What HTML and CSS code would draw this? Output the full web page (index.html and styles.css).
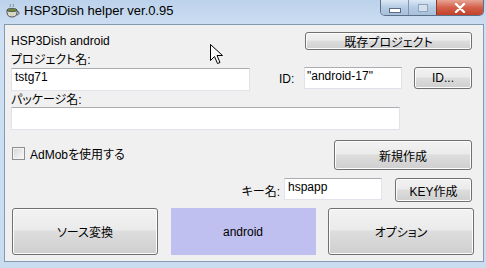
FILE: index.html
```html
<!DOCTYPE html>
<html lang="ja">

<head>
    <title>HSP3Dish helper</title>
    <meta charset="UTF-8">
    <link rel="stylesheet" href="styles.css">
</head>

<body>
    <div class="window">
        <div class="titlebar">
            <svg class="app-icon" width="16" height="16" viewBox="0 0 16 16">
                <path d="M3 7 h10 v2 q0 5 -5 5 q-5 0 -5 -5 z" fill="#d8d8c8" stroke="#555" stroke-width="1"/>
                <ellipse cx="8" cy="7" rx="5" ry="1.6" fill="#6a8a3a" stroke="#444" stroke-width="0.8"/>
                <path d="M13 8.5 q2.5 0 2 2 q-0.5 1.5 -2.5 1.5" fill="none" stroke="#555" stroke-width="1"/>
                <path d="M6 4 q1 -1.5 0 -3 M9 4 q1 -1.5 0 -3" fill="none" stroke="#777" stroke-width="0.8"/>
            </svg>
            <span class="title">HSP3Dish helper ver.0.95</span>
            <div class="caption-buttons">
                <div class="cap-btn cap-min"><span class="min-bar"></span></div>
                <div class="cap-btn cap-max"><span class="max-box"></span></div>
                <div class="cap-btn cap-close">
                    <svg width="12" height="10" viewBox="0 0 12 10">
                        <path d="M2 1 L10 9 M10 1 L2 9" stroke="#fff" stroke-width="2.4" stroke-linecap="round"/>
                    </svg>
                </div>
            </div>
        </div>

        <div class="client">
            <div class="row row-top">
                <span>HSP3Dish android</span>
                <button class="btn btn-existing">既存プロジェクト</button>
            </div>

            <div class="label">プロジェクト名:</div>

            <div class="row row-project">
                <div class="field field-name">tstg71</div>
                <span class="id-label">ID:</span>
                <div class="field field-id">"android-17"</div>
                <button class="btn btn-id">ID...</button>
            </div>

            <div class="label">パッケージ名:</div>

            <div class="row row-package">
                <div class="field field-package"></div>
            </div>

            <div class="row row-admob">
                <label class="check">
                    <span class="check-box"></span>
                    <span>AdMobを使用する</span>
                </label>
                <button class="btn btn-new">新規作成</button>
            </div>

            <div class="row row-key">
                <span class="key-label">キー名:</span>
                <div class="field field-key">hspapp</div>
                <button class="btn btn-key">KEY作成</button>
            </div>

            <div class="row row-bottom">
                <button class="btn btn-big btn-convert">ソース変換</button>
                <div class="target">android</div>
                <button class="btn btn-big btn-option">オプション</button>
            </div>

            <svg class="cursor" width="13" height="21" viewBox="0 0 13 21">
                <path d="M0.5 0.5 L0.5 16.5 L4.5 12.5 L7.5 19.5 L10 18.5 L7 11.5 L12.5 11.5 Z" fill="#fff" stroke="#000" stroke-width="1"/>
            </svg>
        </div>
    </div>
</body>

</html>
```

FILE: styles.css
```css
body {
    margin: 0;
    background: #c4d8ee;
    font-family: "Liberation Sans", "Noto Sans CJK JP", sans-serif;
    font-size: 12px;
    font-feature-settings: "palt";
    color: #000;
}

.window {
    width: 486px;
    height: 268px;
    background: linear-gradient(to bottom, #bcd2eb, #cfe0f3 30px, #c9dcf0);
    overflow: hidden;
}

.titlebar {
    display: flex;
    align-items: flex-start;
    height: 24px;
}

.app-icon {
    margin: 3px 0 0 4px;
}

.title {
    margin-left: 4px;
    margin-top: 3px;
    font-size: 13px;
    line-height: 15px;
}

.caption-buttons {
    display: flex;
    margin-left: auto;
    margin-right: 2px;
    height: 15px;
    border: 1px solid #5b6f88;
    border-top: none;
    border-radius: 0 0 5px 5px;
    overflow: hidden;
}

.cap-btn {
    display: flex;
    align-items: center;
    justify-content: center;
    height: 15px;
}

.cap-min {
    width: 27px;
    background: linear-gradient(to bottom, #dce8f5, #b5cbe3 50%, #a8c0dc);
    border-right: 1px solid #8297b0;
}

.cap-max {
    width: 27px;
    background: linear-gradient(to bottom, #dce8f5, #b5cbe3 50%, #a8c0dc);
    border-right: 1px solid #8a3a2c;
}

.cap-close {
    width: 46px;
    background: linear-gradient(to bottom, #e8a494, #d4604a 50%, #c2402a);
}

.min-bar {
    width: 10px;
    height: 3px;
    background: #fff;
    border: 1px solid #5a6a80;
    margin-top: 6px;
}

.max-box {
    width: 8px;
    height: 6px;
    border: 1px solid #8fa3bb;
    background: #d4e0ee;
}

.client {
    position: relative;
    margin-left: 4px;
    width: 480px;
    height: 238px;
    background: #f0f0f0;
    border: 1px solid #8499b2;
    padding: 7px 11px 0 6px;
    box-sizing: border-box;
}

.row {
    display: flex;
    align-items: center;
}

.label {
    height: 12px;
    line-height: 12px;
}

.row-top {
    height: 18px;
    justify-content: space-between;
    margin-bottom: 4px;
}

.row-project {
    height: 23px;
    margin-top: 1px;
    margin-bottom: 4px;
}

.row-package {
    height: 23px;
    margin-top: 1px;
}

.row-admob {
    height: 30px;
    margin-top: 10px;
    justify-content: space-between;
}

.row-key {
    height: 24px;
    margin-top: 8px;
    justify-content: flex-end;
}

.row-bottom {
    height: 47px;
    margin-top: 6px;
    margin-left: 1px;
    margin-right: -2px;
    justify-content: space-between;
}

.field {
    background: #fff;
    border: 1px solid #e2e3ea;
    border-top-color: #abadb3;
    box-sizing: border-box;
    padding: 1px 3px 0;
    line-height: 14px;
    align-self: flex-start;
}

.field-name {
    width: 239px;
    height: 23px;
    margin-top: 1px;
}

.id-label {
    margin-left: 29px;
    width: 25px;
}

.field-id {
    width: 98px;
    height: 22px;
    padding-left: 2px;
}

.field-package {
    width: 389px;
    height: 23px;
}

.key-label {
    margin-right: 4px;
}

.field-key {
    width: 98px;
    height: 22px;
    margin-right: 13px;
}

.btn {
    font: inherit;
    font-feature-settings: "palt";
    color: #000;
    border: 1px solid #707070;
    border-radius: 3px;
    background: linear-gradient(to bottom, #f2f2f2, #ebebeb 45%, #dddddd 50%, #cfcfcf);
    box-shadow: inset 0 0 0 1px #fcfcfc;
    padding: 0;
    box-sizing: border-box;
}

.btn-existing {
    width: 167px;
    height: 18px;
}

.btn-id {
    width: 58px;
    height: 22px;
    margin-left: 12px;
    align-self: flex-start;
}

.btn-new {
    width: 138px;
    height: 30px;
}

.btn-key {
    width: 77px;
    height: 24px;
}

.btn-big {
    width: 146px;
    height: 47px;
}

.target {
    width: 145px;
    height: 47px;
    background: #c0c0f0;
    display: flex;
    align-items: center;
    justify-content: center;
}

.check {
    display: flex;
    align-items: center;
    gap: 5px;
    margin-left: 1px;
    margin-bottom: 3px;
}

.check-box {
    width: 11px;
    height: 11px;
    border: 1px solid #8e8f8f;
    background: linear-gradient(to bottom right, #d6d6d6, #fbfbfb);
    box-shadow: inset 0 0 0 1px #f4f4f4;
}

.cursor {
    position: absolute;
    left: 205px;
    top: 19px;
}
```
